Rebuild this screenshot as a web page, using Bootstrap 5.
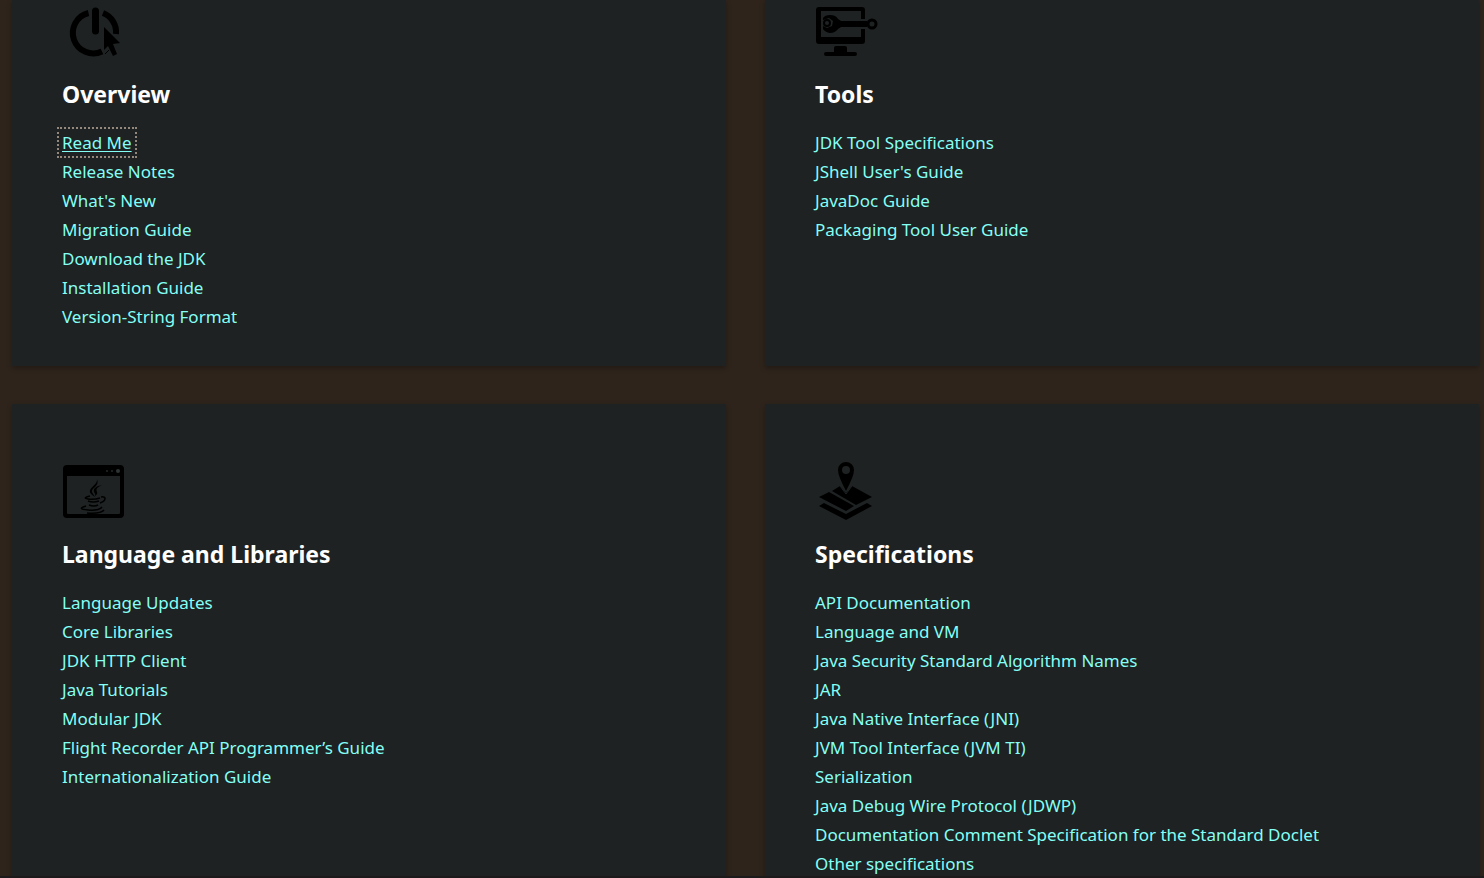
<!DOCTYPE html>
<html lang="en">
<head>
<meta charset="utf-8">
<meta name="viewport" content="width=device-width, initial-scale=1">
<title>JDK Documentation</title>
<link href="https://cdn.jsdelivr.net/npm/bootstrap@5.3.0/dist/css/bootstrap.min.css" rel="stylesheet">
<style>
  body { background: #2e241c; color: #fff; font-family: "Noto Sans", "Open Sans", sans-serif; font-size: 17px; line-height: 29px; }
  .doc-page { height: 100vh; padding: 0 5px 0 12px; border-bottom: 2px solid #1c1a1b; }
  .doc-grid { display: grid; grid-template-columns: 1fr 1fr; column-gap: 39px; row-gap: 38px; }
  .doc-card { background: #1e2222; padding: 56px 50px 35px; box-shadow: 0 2px 5px rgba(0, 0, 0, .3); }
  .doc-card.is-first { padding-top: 0; }
  .doc-icon { width: 64px; height: 64px; fill: #000; stroke: #000; stroke-width: 0; }
  .doc-card h2 { font-size: 23px; line-height: 32px; font-weight: 700; margin: 14px 0 18px; }
  .doc-card a { color: #84fff5; text-decoration: none; }
  .doc-card a:hover, .doc-card a.is-current { text-decoration: underline; text-underline-offset: 2px; text-decoration-thickness: 1px; }
  .doc-card a.is-current { display: inline-block; line-height: 21px; outline: 2px dotted #94877c; outline-offset: 3px; }
</style>
</head>
<body>
<main class="doc-page overflow-hidden">
  <div class="doc-grid">
    <section class="doc-card is-first">
      <svg class="doc-icon d-block" viewBox="-2 0 64 64" aria-hidden="true">
        <path d="M24.500 13A20.500 20.500 0 1 0 38 51.500M39 13A20.500 20.500 0 0 1 52 34" fill="none" stroke-width="6"/>
        <path d="M31.500 11v20" stroke-width="7" stroke-linecap="round"/>
        <path d="M40 27l16 16-7 1 4 10-4 2-5-10-4 4z"/>
        <path d="M41 54l4-4" stroke-width="1"/>
      </svg>
      <h2>Overview</h2>
      <ul class="list-unstyled mb-0">
        <li><a class="is-current" href="#">Read Me</a></li>
        <li><a href="#">Release Notes</a></li>
        <li><a href="#">What's New</a></li>
        <li><a href="#">Migration Guide</a></li>
        <li><a href="#">Download the JDK</a></li>
        <li><a href="#">Installation Guide</a></li>
        <li><a href="#">Version-String Format</a></li>
      </ul>
    </section>
    <section class="doc-card is-first">
      <svg class="doc-icon d-block" viewBox="0 0 64 64" aria-hidden="true">
        <path d="M4 7H47a3 3 0 0 1 3 3V19H46V11H6V37H46V29H50V41a3 3 0 0 1-3 3H4a3 3 0 0 1-3-3V10a3 3 0 0 1 3-3z"/>
        <path d="M21 46h9a2 2 0 0 1 2 2v4h8a2 2 0 0 1 0 4H11a2 2 0 0 1 0-4h8v-4a2 2 0 0 1 2-2z"/>
        <path d="M8 18Q10 15 15 15Q21 15 23 19L26 21H52V27H26L23 29Q20 33 15 33Q10 32 8 29V26L12 28L17 26L18 21L14 18L8 20z"/>
        <circle cx="12" cy="23" r="3" fill="none" stroke-width="2"/>
        <circle cx="57" cy="24" r="4" fill="none" stroke-width="3"/>
      </svg>
      <h2>Tools</h2>
      <ul class="list-unstyled mb-0">
        <li><a href="#">JDK Tool Specifications</a></li>
        <li><a href="#">JShell User's Guide</a></li>
        <li><a href="#">JavaDoc Guide</a></li>
        <li><a href="#">Packaging Tool User Guide</a></li>
      </ul>
    </section>
    <section class="doc-card">
      <svg class="doc-icon d-block" viewBox="0 0 64 64" aria-hidden="true">
        <path fill-rule="evenodd" d="M5 5H58a4 4 0 0 1 4 4V54a4 4 0 0 1-4 4H5a4 4 0 0 1-4-4V9a4 4 0 0 1 4-4zM5 16V53a1 1 0 0 0 1 1H57a1 1 0 0 0 1-1V16z"/>
        <circle cx="56" cy="11" r="2" fill="#303334"/><circle cx="50" cy="11" r="1" fill="#252828"/><circle cx="45" cy="11" r="1" fill="#252828"/>
        <path d="M35 19C38 26 29 28 30 32Q31 34 33 37C20 29 36 27 35 19zM40 25C34 28 34 29 35 32Q36 34 33 36Q34 34 32 32C31 28 35 26 40 25z"/>
        <path d="M28 36Q20 38 26 39Q32 40 38 38M39 37C45 36 44 41 38 43M26 41Q31 43 37 41M27 45Q32 47 36 45M24 46Q14 49 26 50Q37 51 40 47M25 53Q39 54 42 50" fill="none" stroke-width="1.500"/>
      </svg>
      <h2>Language and Libraries</h2>
      <ul class="list-unstyled mb-0">
        <li><a href="#">Language Updates</a></li>
        <li><a href="#">Core Libraries</a></li>
        <li><a href="#">JDK HTTP Client</a></li>
        <li><a href="#">Java Tutorials</a></li>
        <li><a href="#">Modular JDK</a></li>
        <li><a href="#">Flight Recorder API Programmer’s Guide</a></li>
        <li><a href="#">Internationalization Guide</a></li>
      </ul>
    </section>
    <section class="doc-card">
      <svg class="doc-icon d-block" viewBox="0 0 64 64" aria-hidden="true">
        <path d="M25 26L17 31L41 45L57 37L37 26L31 33zM14 32L4 37L31 51L39 46zM4 46L9 43L31 54L52 43L57 46L31 60z"/>
        <path fill-rule="evenodd" d="M31 2a8 8 0 0 1 8 8q0 6-8 21-8-15-8-21a8 8 0 0 1 8-8zM31 6a4 4 0 1 0 0 8 4 4 0 0 0 0-8z"/>
        <path d="M25 26L31 34L37 26" fill="none" stroke="#1e2222" stroke-width="1"/>
      </svg>
      <h2>Specifications</h2>
      <ul class="list-unstyled mb-0">
        <li><a href="#">API Documentation</a></li>
        <li><a href="#">Language and VM</a></li>
        <li><a href="#">Java Security Standard Algorithm Names</a></li>
        <li><a href="#">JAR</a></li>
        <li><a href="#">Java Native Interface (JNI)</a></li>
        <li><a href="#">JVM Tool Interface (JVM TI)</a></li>
        <li><a href="#">Serialization</a></li>
        <li><a href="#">Java Debug Wire Protocol (JDWP)</a></li>
        <li><a href="#">Documentation Comment Specification for the Standard Doclet</a></li>
        <li><a href="#">Other specifications</a></li>
      </ul>
    </section>
  </div>
</main>
<script src="https://cdn.jsdelivr.net/npm/bootstrap@5.3.0/dist/js/bootstrap.bundle.min.js"></script>
</body>
</html>
